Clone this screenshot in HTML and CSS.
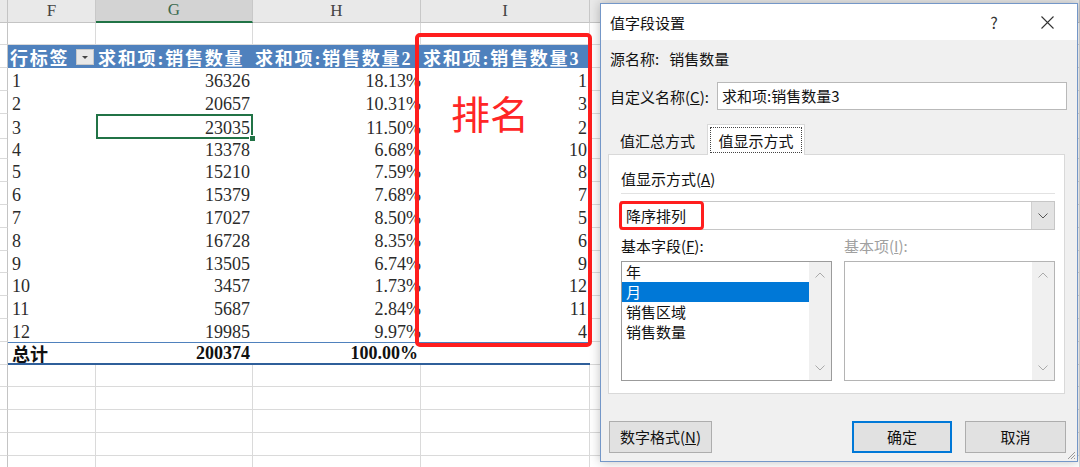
FILE: index.html
```html
<!DOCTYPE html>
<html>
<head>
    <meta charset="utf-8" />
    <title>值字段设置</title>
    <link rel="stylesheet" href="styles.css">
</head>
<body>
    <div class="sheet">
        <div class="row colhead">
            <div class="cell rn"></div>
            <div class="cell ch">F</div>
            <div class="cell ch cur">G</div>
            <div class="cell ch">H</div>
            <div class="cell ch">I</div>
            <div class="cell ch"></div>
        </div>
        <div class="row">
            <div class="cell rn"></div>
            <div class="cell"></div>
            <div class="cell"></div>
            <div class="cell"></div>
            <div class="cell"></div>
            <div class="cell"></div>
        </div>
        <div class="row">
            <div class="cell rn"></div>
            <div class="cell ph">行标签<span class="filter"></span></div>
            <div class="cell ph">求和项:销售数量</div>
            <div class="cell ph">求和项:销售数量2</div>
            <div class="cell ph">求和项:销售数量3</div>
            <div class="cell"></div>
        </div>
        <div class="row"><div class="cell rn"></div><div class="cell pv">1</div><div class="cell pv num">36326</div><div class="cell pv num pct">18.13%</div><div class="cell pv num">1</div><div class="cell"></div></div>
        <div class="row"><div class="cell rn"></div><div class="cell pv">2</div><div class="cell pv num">20657</div><div class="cell pv num pct">10.31%</div><div class="cell pv num">3</div><div class="cell"></div></div>
        <div class="row"><div class="cell rn"></div><div class="cell pv">3</div><div class="cell pv num active">23035</div><div class="cell pv num pct">11.50%</div><div class="cell pv num">2</div><div class="cell"></div></div>
        <div class="row"><div class="cell rn"></div><div class="cell pv">4</div><div class="cell pv num">13378</div><div class="cell pv num pct">6.68%</div><div class="cell pv num">10</div><div class="cell"></div></div>
        <div class="row"><div class="cell rn"></div><div class="cell pv">5</div><div class="cell pv num">15210</div><div class="cell pv num pct">7.59%</div><div class="cell pv num">8</div><div class="cell"></div></div>
        <div class="row"><div class="cell rn"></div><div class="cell pv">6</div><div class="cell pv num">15379</div><div class="cell pv num pct">7.68%</div><div class="cell pv num">7</div><div class="cell"></div></div>
        <div class="row"><div class="cell rn"></div><div class="cell pv">7</div><div class="cell pv num">17027</div><div class="cell pv num pct">8.50%</div><div class="cell pv num">5</div><div class="cell"></div></div>
        <div class="row"><div class="cell rn"></div><div class="cell pv">8</div><div class="cell pv num">16728</div><div class="cell pv num pct">8.35%</div><div class="cell pv num">6</div><div class="cell"></div></div>
        <div class="row"><div class="cell rn"></div><div class="cell pv">9</div><div class="cell pv num">13505</div><div class="cell pv num pct">6.74%</div><div class="cell pv num">9</div><div class="cell"></div></div>
        <div class="row"><div class="cell rn"></div><div class="cell pv">10</div><div class="cell pv num">3457</div><div class="cell pv num pct">1.73%</div><div class="cell pv num">12</div><div class="cell"></div></div>
        <div class="row"><div class="cell rn"></div><div class="cell pv">11</div><div class="cell pv num">5687</div><div class="cell pv num pct">2.84%</div><div class="cell pv num">11</div><div class="cell"></div></div>
        <div class="row"><div class="cell rn"></div><div class="cell pv">12</div><div class="cell pv num">19985</div><div class="cell pv num pct">9.97%</div><div class="cell pv num">4</div><div class="cell"></div></div>
        <div class="row"><div class="cell rn"></div><div class="cell tot">总计</div><div class="cell tot num">200374</div><div class="cell tot num">100.00%</div><div class="cell tot"></div><div class="cell"></div></div>
        <div class="row"><div class="cell rn"></div><div class="cell"></div><div class="cell"></div><div class="cell"></div><div class="cell"></div><div class="cell"></div></div>
        <div class="row"><div class="cell rn"></div><div class="cell"></div><div class="cell"></div><div class="cell"></div><div class="cell"></div><div class="cell"></div></div>
        <div class="row"><div class="cell rn"></div><div class="cell"></div><div class="cell"></div><div class="cell"></div><div class="cell"></div><div class="cell"></div></div>
        <div class="row"><div class="cell rn"></div><div class="cell"></div><div class="cell"></div><div class="cell"></div><div class="cell"></div><div class="cell"></div></div>
        <div class="row"><div class="cell rn"></div><div class="cell"></div><div class="cell"></div><div class="cell"></div><div class="cell"></div><div class="cell"></div></div>
    </div>

    <!-- 标注: 红框 + 排名 -->
    <div class="redbox"></div>
    <div class="rank">排名</div>

    <div class="dlg">
        <div class="dlg-title">
            <span class="dlg-name">值字段设置</span>
            <span class="dlg-help">?</span>
            <span class="dlg-close">
                <svg width="13" height="13" viewBox="0 0 13 13"><path d="M0.5 0.5 L12.5 12.5 M12.5 0.5 L0.5 12.5" stroke="#333" stroke-width="1.1" fill="none"/></svg>
            </span>
        </div>
        <div class="dlg-body">
            <div class="src">源名称:<span class="src-val">销售数量</span></div>
            <div class="cname">
                <span class="cname-lbl">自定义名称(<u>C</u>):</span>
                <div class="input">求和项:销售数量3</div>
            </div>
            <div class="tabs">
                <div class="tab">值汇总方式</div>
                <div class="tab on"><span class="focus">值显示方式</span></div>
            </div>
            <div class="panel">
                <div class="lbl">值显示方式(<u>A</u>)</div>
                <div class="sep"></div>
                <div class="select">
                    <span class="sel-text">降序排列</span>
                    <span class="mark"></span>
                    <span class="sel-btn">
                        <svg width="10" height="6" viewBox="0 0 10 6"><path d="M0.5 0.5 L5 5 L9.5 0.5" stroke="#555" stroke-width="1" fill="none"/></svg>
                    </span>
                </div>
                <div class="lists">
                    <div class="col">
                        <div class="lbl lbl2">基本字段(<u>F</u>):</div>
                        <div class="list">
                            <div class="items">
                                <div class="item">年</div>
                                <div class="item picked">月</div>
                                <div class="item">销售区域</div>
                                <div class="item">销售数量</div>
                            </div>
                            <div class="vbar">
                                <svg width="10" height="6" viewBox="0 0 10 6"><path d="M0.5 5.5 L5 1 L9.5 5.5" stroke="#aaa" stroke-width="1" fill="none"/></svg>
                                <svg width="10" height="6" viewBox="0 0 10 6"><path d="M0.5 0.5 L5 5 L9.5 0.5" stroke="#aaa" stroke-width="1" fill="none"/></svg>
                            </div>
                        </div>
                    </div>
                    <div class="col off">
                        <div class="lbl lbl2">基本项(<u>I</u>):</div>
                        <div class="list">
                            <div class="items"></div>
                            <div class="vbar">
                                <svg width="10" height="6" viewBox="0 0 10 6"><path d="M0.5 5.5 L5 1 L9.5 5.5" stroke="#aaa" stroke-width="1" fill="none"/></svg>
                                <svg width="10" height="6" viewBox="0 0 10 6"><path d="M0.5 0.5 L5 5 L9.5 0.5" stroke="#aaa" stroke-width="1" fill="none"/></svg>
                            </div>
                        </div>
                    </div>
                </div>
            </div>
            <div class="btns">
                <div class="btn">数字格式(<u>N</u>)</div>
                <div class="btn ok">确定</div>
                <div class="btn cancel">取消</div>
            </div>
        </div>
        <svg class="grip" width="10" height="10" viewBox="0 0 10 10"><path d="M9 2 L2 9 M9 5 L5 9 M9 8 L8 9" stroke="#999" stroke-width="1" fill="none"/></svg>
    </div>
</body>
</html>
```

FILE: styles.css
```css
body {
    margin: 0;
    width: 1080px;
    height: 467px;
    overflow: hidden;
    position: relative;
    background-color: #ffffff;
    font-family: "Liberation Serif", "Noto Sans CJK SC", serif;
}

/* 表格 */
.row {
    display: grid;
    grid-template-columns: 8px 88px 157px 168px 169px 1fr;
    height: 22.8px;
    font-size: 18px;
    color: #2b2b2b;
}

.cell {
    box-sizing: border-box;
    display: flex;
    align-items: center;
    padding: 2px 3px 0 4px;
    border-right: 1px solid #dadada;
    border-bottom: 1px solid #dadada;
    white-space: nowrap;
    overflow: hidden;
    position: relative;
}

.rn {
    padding: 0;
    border-right: 1px solid #c4c4c4;
}

.colhead {
    height: 22.7px;
}

.ch {
    justify-content: center;
    padding: 0;
    background-color: #e9e9e9;
    border-right: 1px solid #c8c8c8;
    border-bottom: 1px solid #c4c4c4;
    color: #444;
    font-size: 17px;
}

.colhead .rn {
    background-color: #e9e9e9;
    border-bottom: 1px solid #c4c4c4;
}

.ch.cur {
    background-color: #d3d3d3;
    border-bottom: 2px solid #217346;
    color: #3b6a4e;
}

.ph {
    background-color: #4f81bd;
    color: #ffffff;
    font-weight: bold;
    letter-spacing: 1.8px;
    border: none;
    padding: 0 2px;
}

.ph:first-of-type {
    padding-left: 4px;
    letter-spacing: 0.5px;
}

.filter {
    position: absolute;
    left: 68px;
    top: 4px;
    width: 18px;
    height: 16px;
    background-color: #e8e8e8;
    border: 1px solid #c9c9c9;
    box-sizing: border-box;
}

.filter::after {
    content: "";
    position: absolute;
    left: 5px;
    top: 6px;
    border-left: 3px solid transparent;
    border-right: 3px solid transparent;
    border-top: 3px solid #444;
}

.pv {
    border: none;
    padding-top: 4px;
}

.num {
    justify-content: flex-end;
}

.pct {
    padding-right: 0;
}

.tot {
    border-right: none;
    border-top: 1px solid #4f81bd;
    border-bottom: 2px solid #2f5f9a;
    font-weight: bold;
    color: #111;
    padding-top: 1px;
}

.active {
    overflow: visible;
    box-shadow: inset 0 0 0 2px #217346;
}

.active::after {
    content: "";
    position: absolute;
    right: -3px;
    bottom: -3px;
    width: 5px;
    height: 5px;
    background-color: #217346;
    border: 1px solid #ffffff;
}

/* 标注 */
.redbox {
    position: absolute;
    left: 415px;
    top: 33px;
    width: 177px;
    height: 314px;
    box-sizing: border-box;
    border: 4px solid #ff1e1e;
    border-radius: 5px;
}

.rank {
    position: absolute;
    left: 451px;
    top: 90px;
    font-family: "Noto Sans CJK SC", sans-serif;
    font-size: 39px;
    line-height: 44px;
    color: #ff2626;
}

/* 对话框 */
.dlg {
    position: absolute;
    left: 600px;
    top: 3px;
    width: 478px;
    height: 459px;
    box-sizing: border-box;
    border: 1px solid #7497c8;
    background-color: #f0f0f0;
    box-shadow: 0 0 10px rgba(0, 0, 0, 0.25);
    font-family: "Noto Sans CJK SC", sans-serif;
    font-size: 15px;
    color: #111;
}

.dlg-title {
    height: 36px;
    display: flex;
    align-items: center;
    background-color: #ffffff;
    padding-left: 9px;
}

.dlg-help {
    margin-left: auto;
    width: 30px;
    text-align: center;
    color: #333;
    font-size: 16px;
    margin-right: 15px;
}

.dlg-close {
    width: 46px;
    display: flex;
    justify-content: center;
    margin-right: 7px;
}

.dlg-body {
    padding: 0 12px 0 7px;
}

.src {
    margin-top: 8px;
    height: 22px;
    line-height: 22px;
    padding-left: 2px;
}

.src-val {
    margin-left: 10px;
}

.cname {
    display: flex;
    align-items: center;
    margin-top: 12px;
    padding-left: 2px;
    height: 28px;
}

.cname-lbl {
    width: 107px;
}

.input {
    flex: 1;
    height: 28px;
    box-sizing: border-box;
    margin-right: -2px;
    border: 1px solid #b9b9b9;
    background-color: #ffffff;
    padding-left: 4px;
    line-height: 26px;
}

.tabs {
    display: flex;
    align-items: flex-end;
    margin-top: 13px;
    height: 31px;
}

.tab {
    width: 99px;
    height: 26px;
    line-height: 26px;
    text-align: center;
    box-sizing: border-box;
}

.tab.on {
    width: 98px;
    height: 31px;
    padding: 2px;
    background-color: #ffffff;
    border: 1px solid #d9d9d9;
    border-bottom: none;
    margin-bottom: -1px;
    position: relative;
}

.focus {
    display: block;
    height: 26px;
    line-height: 25px;
    border: 1px dotted #444;
    box-sizing: border-box;
}

.panel {
    height: 240px;
    box-sizing: border-box;
    border: 1px solid #d9d9d9;
    background-color: #ffffff;
    padding: 14px 9px 0 12px;
}

.lbl {
    height: 20px;
    line-height: 20px;
}

.lbl2 {
    margin-top: 6px;
}

.sep {
    margin-top: 4px;
    height: 1px;
    background-color: #e2e2e2;
}

.select {
    margin-top: 7px;
    margin-left: -1px;
    height: 29px;
    box-sizing: border-box;
    border: 1px solid #c6c6c6;
    display: flex;
    align-items: center;
    position: relative;
    padding-left: 5px;
}

.mark {
    position: absolute;
    left: -2px;
    top: -1px;
    width: 85px;
    height: 29px;
    box-sizing: border-box;
    border: 3px solid #ff1e1e;
    border-radius: 4px;
}

.sel-btn {
    margin-left: auto;
    width: 22px;
    height: 27px;
    background-color: #e3e3e3;
    border-left: 1px solid #cfcfcf;
    display: flex;
    align-items: center;
    justify-content: center;
}

.lists {
    display: flex;
    gap: 12px;
}

.col {
    width: 211px;
}

.col.off .lbl {
    color: #a0a0a0;
}

.list {
    margin-top: 5px;
    height: 120px;
    box-sizing: border-box;
    border: 1px solid #9b9b9b;
    display: flex;
}

.col.off .list {
    border-color: #b4b4b4;
}

.items {
    flex: 1;
}

.item {
    height: 20px;
    line-height: 20px;
    padding-left: 4px;
}

.item.picked {
    background-color: #0078d7;
    color: #ffffff;
}

.vbar {
    width: 22px;
    background-color: #f0f0f0;
    display: flex;
    flex-direction: column;
    justify-content: space-between;
    align-items: center;
    padding: 10px 0 9px;
    box-sizing: border-box;
}

.btns {
    display: flex;
    margin-top: 27px;
    padding-left: 1px;
    margin-right: -1px;
}

.btn {
    width: 103px;
    height: 32px;
    box-sizing: border-box;
    border: 1px solid #adadad;
    background-color: #e1e1e1;
    text-align: center;
    line-height: 30px;
}

.btn.ok {
    width: 100px;
    margin-left: auto;
    border: 2px solid #0078d7;
    line-height: 28px;
}

.btn.cancel {
    width: 101px;
    margin-left: 13px;
}

.grip {
    position: absolute;
    right: 1px;
    bottom: 1px;
}
```
